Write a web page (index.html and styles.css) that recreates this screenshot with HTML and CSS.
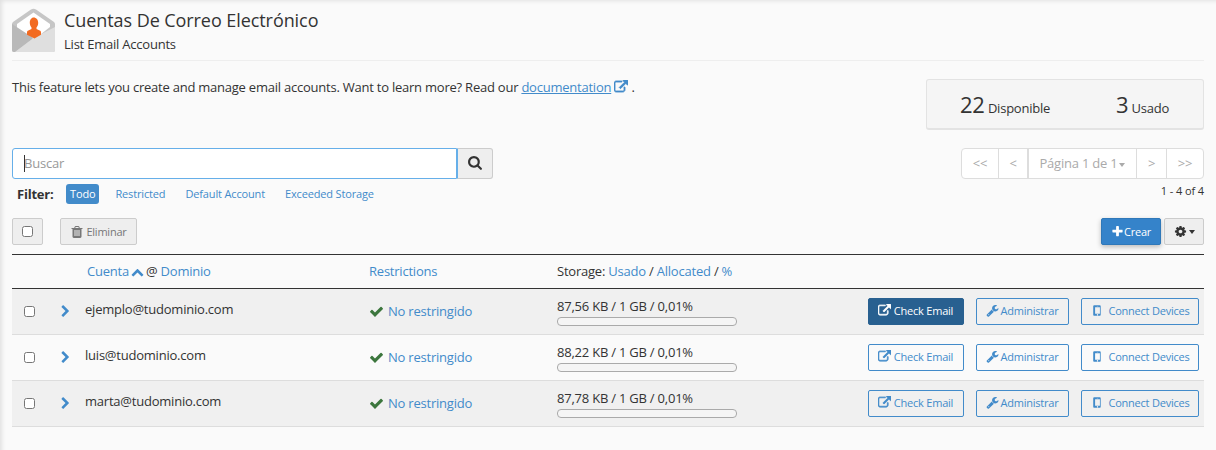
FILE: index.html
```html
<!DOCTYPE html>
<html lang="es">
<head>
<meta charset="utf-8">
<title>Cuentas De Correo Electrónico</title>
<link rel="stylesheet" href="styles.css">
</head>
<body>
<svg class="defs" width="0" height="0" aria-hidden="true">
  <symbol id="i-search" viewBox="0 0 1664 1792"><path d="M1152 704q0-185-131.5-316.5t-316.5-131.5-316.5 131.5-131.5 316.5 131.5 316.5 316.5 131.5 316.5-131.5 131.5-316.5zm512 832q0 52-38 90t-90 38q-54 0-90-38l-343-342q-179 124-399 124-143 0-273.5-55.5t-225-150-150-225-55.5-273.5 55.5-273.5 150-225 225-150 273.5-55.5 273.5 55.5 225 150 150 225 55.5 273.5q0 220-124 399l343 343q37 37 37 90z"/></symbol>
  <symbol id="i-check" viewBox="0 0 1792 1792"><path d="M1671 566q0 40-28 68l-724 724-136 136q-28 28-68 28t-68-28l-136-136-362-362q-28-28-28-68t28-68l136-136q28-28 68-28t68 28l294 295 656-657q28-28 68-28t68 28l136 136q28 28 28 68z"/></symbol>
  <symbol id="i-right" viewBox="0 0 1792 1792"><path d="M1363 877l-742 742q-19 19-45 19t-45-19l-166-166q-19-19-19-45t19-45l531-531-531-531q-19-19-19-45t19-45l166-166q19-19 45-19t45 19l742 742q19 19 19 45t-19 45z"/></symbol>
  <symbol id="i-up" viewBox="0 0 1792 1792"><path d="M1683 1331l-166 165q-19 19-45 19t-45-19l-531-531-531 531q-19 19-45 19t-45-19l-166-165q-19-19-19-45.5t19-45.5l742-741q19-19 45-19t45 19l742 741q19 19 19 45.5t-19 45.5z"/></symbol>
  <symbol id="i-plus" viewBox="0 0 1792 1792"><path d="M1600 736v192q0 40-28 68t-68 28h-416v416q0 40-28 68t-68 28h-192q-40 0-68-28t-28-68v-416h-416q-40 0-68-28t-28-68v-192q0-40 28-68t68-28h416v-416q0-40 28-68t68-28h192q40 0 68 28t28 68v416h416q40 0 68 28t28 68z"/></symbol>
  <symbol id="i-ext" viewBox="0 0 1792 1792"><path d="M1408 928v320q0 119-84.5 203.5t-203.5 84.5h-832q-119 0-203.5-84.5t-84.5-203.5v-832q0-119 84.5-203.5t203.5-84.5h704q14 0 23 9t9 23v64q0 14-9 23t-23 9h-704q-66 0-113 47t-47 113v832q0 66 47 113t113 47h832q66 0 113-47t47-113v-320q0-14 9-23t23-9h64q14 0 23 9t9 23zm384-864v512q0 26-19 45t-45 19-45-19l-176-176-652 652q-10 10-23 10t-23-10l-114-114q-10-10-10-23t10-23l652-652-176-176q-19-19-19-45t19-45 45-19h512q26 0 45 19t19 45z"/></symbol>
  <symbol id="i-wrench" viewBox="0 0 1792 1792"><path d="M448 1472q0-26-19-45t-45-19-45 19-19 45 19 45 45 19 45-19 19-45zm644-420l-682 682q-37 37-90 37-52 0-91-37l-106-108q-38-36-38-90 0-53 38-91l681-681q39 98 114.5 173.5t173.5 114.5zm634-435q0 39-23 106-47 134-164.5 217.5t-258.5 83.5q-185 0-316.5-131.5t-131.5-316.5 131.5-316.5 316.5-131.5q58 0 121.5 16.5t107.5 46.5q16 11 16 28t-16 28l-293 169v224l193 107q5-3 79-48.5t135.5-81 70.5-35.5q15 0 23.5 10t8.5 25z"/></symbol>
  <symbol id="i-mobile" viewBox="0 0 1792 1792"><path d="M976 1408q0-33-23.5-56.5t-56.5-23.5-56.5 23.5-23.5 56.5 23.5 56.5 56.5 23.5 56.5-23.5 23.5-56.5zm208-160v-704q0-13-9.5-22.5t-22.5-9.5h-512q-13 0-22.5 9.5t-9.5 22.5v704q0 13 9.5 22.5t22.5 9.5h512q13 0 22.5-9.5t9.5-22.5zm-192-848q0-16-16-16h-160q-16 0-16 16t16 16h160q16 0 16-16zm288-16v1024q0 52-38 90t-90 38h-640q-52 0-90-38t-38-90v-1024q0-52 38-90t90-38h640q52 0 90 38t38 90z"/></symbol>
  <symbol id="i-trash" viewBox="0 0 1792 1792"><path d="M704 1376v-704q0-14-9-23t-23-9h-64q-14 0-23 9t-9 23v704q0 14 9 23t23 9h64q14 0 23-9t9-23zm256 0v-704q0-14-9-23t-23-9h-64q-14 0-23 9t-9 23v704q0 14 9 23t23 9h64q14 0 23-9t9-23zm256 0v-704q0-14-9-23t-23-9h-64q-14 0-23 9t-9 23v704q0 14 9 23t23 9h64q14 0 23-9t9-23zm-544-992h448l-48-117q-7-9-17-11h-317q-10 2-17 11zm928 32v64q0 14-9 23t-23 9h-96v948q0 83-47 143.5t-113 60.5h-832q-66 0-113-58.5t-47-141.5v-952h-96q-14 0-23-9t-9-23v-64q0-14 9-23t23-9h309l70-167q15-37 54-63t79-26h320q40 0 79 26t54 63l70 167h309q14 0 23 9t9 23z"/></symbol>
  <symbol id="i-cog" viewBox="0 0 1792 1792"><path d="M1152 896q0-106-75-181t-181-75-181 75-75 181 75 181 181 75 181-75 75-181zm512-109v222q0 12-8 23t-20 13l-185 28q-19 54-39 91 35 50 107 138 10 12 10 25t-9 23q-27 37-99 108t-94 71q-12 0-26-9l-138-108q-44 23-91 38-16 136-29 186-7 28-36 28h-222q-14 0-24.5-8.5t-11.5-21.5l-28-184q-49-16-90-37l-141 107q-10 9-25 9-14 0-25-11-126-114-165-168-7-10-7-23 0-12 8-23 15-21 51-66.5t54-70.5q-27-50-41-99l-183-27q-13-2-21-12.5t-8-23.5v-222q0-12 8-23t19-13l186-28q14-46 39-92-40-57-107-138-10-12-10-24 0-10 9-23 26-36 98.5-107.5t94.5-71.5q13 0 26 10l138 107q44-23 91-38 16-136 29-186 7-28 36-28h222q14 0 24.5 8.5t11.5 21.5l28 184q49 16 90 37l142-107q9-9 24-9 13 0 25 10 129 119 165 170 7 8 7 22 0 12-8 23-15 21-51 66.5t-54 70.5q26 50 41 98l183 28q13 2 21 12.5t8 23.5z"/></symbol>
</svg>

<div class="page">
  <header class="head">
    <svg class="head-icon" viewBox="0 0 44 44" width="44" height="44" aria-hidden="true">
      <path d="M0 16 Q0 15 1 14 L19 1.500 Q21.500 0 24 1.500 L42 14 Q43 15 43 16 V42 Q43 44 41 44 H2 Q0 44 0 42Z" fill="#c6c6c6"/>
      <path d="M5 16 L21.500 4.500 L38 16 L38 19 L21.500 32 L5 21 Z" fill="#fff"/>
      <path d="M0 16 L21.500 30 L3 44 H2 Q0 44 0 42Z" fill="#b9b9b9"/>
      <path d="M43 19 V42 Q43 44 41 44 H3 L21.500 30 Z" fill="#dfdfdf"/>
      <path d="M21.500 9.500c3 0 4.700 2.300 4.700 5.300 0 2-.7 3.500-1.700 4.700v1.600l3.200 1.500c.9.400 1.300 1.100 1.300 2v2.200l-6.500 3.800-7.500-3.800v-2.200c0-.9.400-1.600 1.300-2l3.200-1.500v-1.600c-1-1.200-1.700-2.700-1.700-4.700 0-3 1.700-5.300 3.700-5.300z" fill="#f26b21"/>
    </svg>
    <div class="head-text">
      <h1>Cuentas De Correo Electrónico</h1>
      <p>List Email Accounts</p>
    </div>
  </header>

  <section class="intro">
    <p>This feature lets you create and manage email accounts. Want to learn more? Read our <a href="#">documentation</a> <svg class="ic ic-doc"><use href="#i-ext"/></svg> .</p>
    <div class="stats">
      <span class="stat"><b>22</b> Disponible</span>
      <span class="stat"><b>3</b> Usado</span>
    </div>
  </section>

  <section class="search-row">
    <div class="search-left">
      <div class="search">
        <div class="search-input"><span class="caret"></span>Buscar</div>
        <button class="search-btn"><svg class="ic ic-search"><use href="#i-search"/></svg></button>
      </div>
      <div class="filters">
        <strong>Filter:</strong>
        <a class="pill active" href="#">Todo</a>
        <a class="pill" href="#">Restricted</a>
        <a class="pill" href="#">Default Account</a>
        <a class="pill" href="#">Exceeded Storage</a>
      </div>
    </div>
    <div class="search-right">
      <div class="pager">
        <span class="pg pg-a">&lt;&lt;</span>
        <span class="pg pg-b">&lt;</span>
        <span class="pg pg-c">Página 1 de 1<i class="caret-down"></i></span>
        <span class="pg pg-b2">&gt;</span>
        <span class="pg pg-a2">&gt;&gt;</span>
      </div>
      <div class="count">1 - 4 of 4</div>
    </div>
  </section>

  <section class="toolbar">
    <div class="tool-left">
      <span class="btn-check"><input type="checkbox"></span>
      <span class="btn-del"><svg class="ic ic-trash"><use href="#i-trash"/></svg>Eliminar</span>
    </div>
    <div class="tool-right">
      <span class="btn-create"><svg class="ic ic-plus"><use href="#i-plus"/></svg>Crear</span>
      <span class="btn-gear"><svg class="ic ic-cog"><use href="#i-cog"/></svg><i class="caret-down dark"></i></span>
    </div>
  </section>

  <table class="grid">
    <thead>
      <tr>
        <th class="c-check"></th>
        <th class="c-exp"></th>
        <th class="c-acct"><a href="#">Cuenta</a><svg class="ic ic-up"><use href="#i-up"/></svg>@ <a href="#">Dominio</a></th>
        <th class="c-rest"><a href="#">Restrictions</a></th>
        <th class="c-stor">Storage: <a href="#">Usado</a> / <a href="#">Allocated</a> / <a href="#">%</a></th>
        <th class="c-act"></th>
      </tr>
    </thead>
    <tbody>
      <tr class="odd">
        <td><input type="checkbox"></td>
        <td><svg class="ic ic-right"><use href="#i-right"/></svg></td>
        <td class="mail">ejemplo@tudominio.com</td>
        <td class="rest"><svg class="ic ic-check"><use href="#i-check"/></svg><a href="#">No restringido</a></td>
        <td class="stor">87,56 KB / 1 GB / 0,01%<div class="bar"></div></td>
        <td><div class="acts"><span class="ab ab-e primary"><svg class="ic ic-ext"><use href="#i-ext"/></svg>Check Email</span><span class="ab ab-m"><svg class="ic ic-wr"><use href="#i-wrench"/></svg>Administrar</span><span class="ab ab-c"><svg class="ic ic-mob"><use href="#i-mobile"/></svg>Connect Devices</span></div></td>
      </tr>
      <tr>
        <td><input type="checkbox"></td>
        <td><svg class="ic ic-right"><use href="#i-right"/></svg></td>
        <td class="mail">luis@tudominio.com</td>
        <td class="rest"><svg class="ic ic-check"><use href="#i-check"/></svg><a href="#">No restringido</a></td>
        <td class="stor">88,22 KB / 1 GB / 0,01%<div class="bar"></div></td>
        <td><div class="acts"><span class="ab ab-e"><svg class="ic ic-ext"><use href="#i-ext"/></svg>Check Email</span><span class="ab ab-m"><svg class="ic ic-wr"><use href="#i-wrench"/></svg>Administrar</span><span class="ab ab-c"><svg class="ic ic-mob"><use href="#i-mobile"/></svg>Connect Devices</span></div></td>
      </tr>
      <tr class="odd">
        <td><input type="checkbox"></td>
        <td><svg class="ic ic-right"><use href="#i-right"/></svg></td>
        <td class="mail">marta@tudominio.com</td>
        <td class="rest"><svg class="ic ic-check"><use href="#i-check"/></svg><a href="#">No restringido</a></td>
        <td class="stor">87,78 KB / 1 GB / 0,01%<div class="bar"></div></td>
        <td><div class="acts"><span class="ab ab-e"><svg class="ic ic-ext"><use href="#i-ext"/></svg>Check Email</span><span class="ab ab-m"><svg class="ic ic-wr"><use href="#i-wrench"/></svg>Administrar</span><span class="ab ab-c"><svg class="ic ic-mob"><use href="#i-mobile"/></svg>Connect Devices</span></div></td>
      </tr>
    </tbody>
  </table>
</div>
</body>
</html>
```

FILE: styles.css
```css
* { box-sizing: border-box; }
html, body { margin: 0; height: 450px; overflow: hidden; }
body {
  background: #fafafa;
  color: #333;
  font-family: "Open Sans", sans-serif;
  font-size: 13px;
  letter-spacing: -0.22px;
  box-shadow: inset 4px 3px 4px -2px rgba(0, 0, 0, 0.1);
}
a { color: #428bca; text-decoration: none; }
.defs { position: absolute; }
.ic { display: inline-block; fill: currentColor; vertical-align: middle; }

.page { padding: 8px 12px 0; }

.head { display: flex; gap: 8px; height: 53px; border-bottom: 1px solid #eee; }
.head-icon { flex: none; }
.head-text h1 { margin: 0; font-size: 18px; font-weight: 400; line-height: 24px; letter-spacing: -0.07px; }
.head-text p { margin: 4px 0 0; font-size: 13px; line-height: 17px; }

.intro { display: flex; justify-content: space-between; margin-top: 18px; }
.intro p { margin: 0; line-height: 16px; letter-spacing: -0.23px; }
.intro a { text-decoration: underline; }
.ic-doc { width: 14px; height: 14px; color: #428bca; vertical-align: -2px; stroke: currentColor; stroke-width: 110; margin-left: 0; }
.stats {
  width: 278px; height: 51px;
  display: flex; padding: 0 34px 0 33px; justify-content: space-between; align-items: center;
  background: #f5f5f5; border: 1px solid #e3e3e3; border-bottom-width: 2px; border-radius: 3px;
}
.stat { font-size: 13px; }
.stat b { font-size: 22px; font-weight: 400; }

.search-row { display: flex; justify-content: space-between; margin-top: 18px; height: 70px; }
.search { display: flex; width: 481px; height: 31px; }
.search-input {
  flex: 1; position: relative; padding-left: 11px; line-height: 29px; color: #999;
  background: #fff; border: 1px solid #66afe9; border-radius: 3px 0 0 3px;
}
.caret { position: absolute; left: 11px; top: 6px; width: 1px; height: 17px; background: #333; }
.search-btn {
  width: 36px; padding: 0; background: #eee; border: 1px solid #ccc; border-left-color: #66afe9;
  border-radius: 0 3px 3px 0; color: #333;
}
.ic-search { width: 14px; height: 15px; }
.filters { display: flex; align-items: center; margin: 5px 0 0 5px; font-size: 11px; height: 20px; letter-spacing: -0.15px; }
.filters strong { font-size: 13px; font-weight: 700; width: 49px; letter-spacing: -0.22px; }
.pill { padding: 0 4px; line-height: 20px; border-radius: 3px; margin-right: 12px; }
.pill.active { background: #428bca; color: #fff; }

.search-right { width: 243px; }
.pager { display: flex; height: 31px; background: #fff; border: 1px solid #ddd; border-radius: 4px; color: #aaa; line-height: 29px; text-align: center; }
.pg { border-right: 1px solid #ddd; }
.pg-a { width: 37px; }
.pg-b { width: 30px; border-right-width: 2px; }
.pg-c { width: 108px; }
.pg-b2 { width: 30px; }
.pg-a2 { flex: 1; border-right: 0; }
.caret-down {
  display: inline-block; width: 0; height: 0; margin-left: 2px; vertical-align: middle;
  border-top: 4px solid #aaa; border-left: 3px solid transparent; border-right: 3px solid transparent;
}
.caret-down.dark { border-top-color: #333; margin-left: 2px; }
.count { margin-top: 4px; font-size: 11px; line-height: 15px; text-align: right; letter-spacing: -0.1px; }

.toolbar { display: flex; justify-content: space-between; height: 27px; }
.tool-left, .tool-right { display: flex; }
.btn-check, .btn-del, .btn-gear {
  display: flex; align-items: center; justify-content: center;
  background: #eee; border: 1px solid #ccc; border-radius: 2px; color: #777;
}
.btn-check { width: 31px; }
.btn-check input { margin: 0; width: 11px; height: 11px; }
.btn-del { width: 77px; margin-left: 17px; font-size: 11px; }
.ic-trash { width: 14px; height: 14px; margin-right: 2px; }
.btn-create {
  display: flex; align-items: center; justify-content: center;
  width: 60px; background: #3583ca; border: 1px solid #2f78b9; border-radius: 2px; color: #fff; font-size: 11px;
  box-shadow: 0 2px 5px rgba(0, 0, 0, 0.25);
}
.ic-plus { width: 13px; height: 13px; }
.btn-gear { width: 40px; margin-left: 3px; color: #333; }
.ic-cog { width: 13px; height: 13px; }

.grid { width: 1192px; margin-top: 9px; border-collapse: collapse; table-layout: fixed; }
.grid th { height: 34px; padding: 0 0 2px; font-size: 13px; font-weight: 400; text-align: left; border-top: 1px solid #333; border-bottom: 1px solid #333; }
.c-check { width: 36px; }
.c-exp { width: 37px; }
.grid .c-acct { width: 284px; padding-left: 2px; }
.c-rest { width: 188px; }
.c-stor { width: 300px; }
.ic-up { width: 13px; height: 14px; margin: 0 2px; color: #428bca; vertical-align: -3px; }
.grid td { height: 46px; padding: 0; border-bottom: 1px solid #ddd; vertical-align: middle; }
.grid tr.odd td { background: #f0f0f0; }
.grid td:first-child { padding-left: 12px; }
.grid td input { display: block; margin: 0; width: 11px; height: 11px; }
.ic-right { width: 13px; height: 13px; color: #428bca; margin-left: 11px; display: block; }
.grid td.mail { padding-bottom: 6px; }
.grid td.rest { padding-bottom: 2px; }
.ic-check { width: 15px; height: 15px; color: #3c763d; margin-right: 4px; vertical-align: -3px; }
.grid td.stor { line-height: 19px; padding-bottom: 1px; }
.bar { width: 180px; height: 9px; margin-top: 1px; background: #f5f5f5; border: 1px solid #aaa; border-radius: 4px; }
.acts { display: flex; justify-content: flex-end; gap: 12px; padding-right: 5px; }
.ab {
  display: flex; align-items: center; justify-content: center;
  height: 27px; padding-bottom: 2px; font-size: 11px; color: #428bca;
  border: 1px solid #428bca; border-radius: 2px;
}
.ab.primary { background: #286090; border-color: #286090; color: #fff; }
.ab-e { width: 96px; }
.ab-m { width: 93px; }
.ab-c { width: 118px; }
.ic-ext { width: 13px; height: 13px; margin: 0 3px 0 -1px; stroke: currentColor; stroke-width: 90; }
.ic-wr { width: 13px; height: 13px; margin-right: 1px; }
.ic-mob { width: 15px; height: 15px; margin-right: 3px; }
```
